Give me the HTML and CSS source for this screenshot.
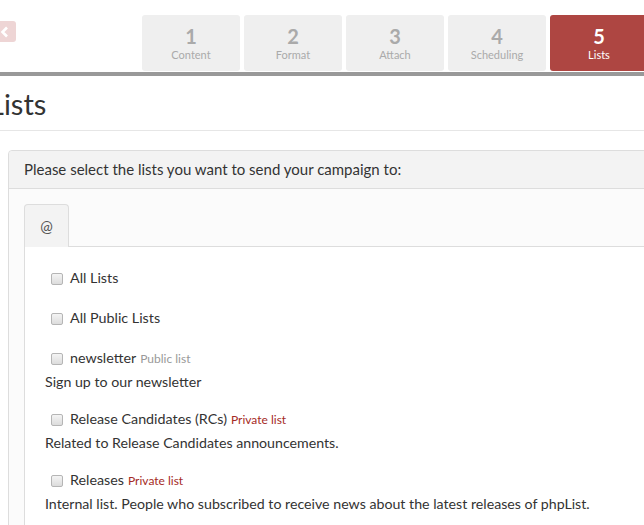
FILE: index.html
```html
<!DOCTYPE html>
<html>
<head>
<meta charset="utf-8">
<link rel="stylesheet" href="styles.css">
</head>
<body>
<div class="page">
  <div class="topbar">
    <a class="back" href="#"><svg width="10" height="12" viewBox="0 0 10 12"><path d="M7 1.5 L2.5 6 L7 10.5" fill="none" stroke="#fff" stroke-width="2.6"/></svg></a>
    <ul class="steps">
      <li class="step"><span class="num">1</span><span class="lbl">Content</span></li>
      <li class="step"><span class="num">2</span><span class="lbl">Format</span></li>
      <li class="step"><span class="num">3</span><span class="lbl">Attach</span></li>
      <li class="step"><span class="num">4</span><span class="lbl">Scheduling</span></li>
      <li class="step active"><span class="num">5</span><span class="lbl">Lists</span></li>
    </ul>
  </div>
  <h1 class="title">Lists</h1>
  <div class="panel">
    <div class="panel-head">Please select the lists you want to send your campaign to:</div>
    <div class="panel-body">
      <div class="tabs">
        <div class="tab">@</div>
        <div class="tab-fill"></div>
      </div>
      <div class="tab-content">
        <div class="item"><label class="chk"><input type="checkbox"><span>All Lists</span></label></div>
        <div class="item"><label class="chk"><input type="checkbox"><span>All Public Lists</span></label></div>
        <div class="item"><label class="chk"><input type="checkbox"><span>newsletter</span> <small class="pub">Public list</small></label>
          <p class="desc">Sign up to our newsletter</p></div>
        <div class="item"><label class="chk"><input type="checkbox"><span>Release Candidates (RCs)</span> <small class="priv">Private list</small></label>
          <p class="desc">Related to Release Candidates announcements.</p></div>
        <div class="item"><label class="chk"><input type="checkbox"><span>Releases</span> <small class="priv">Private list</small></label>
          <p class="desc">Internal list. People who subscribed to receive news about the latest releases of phpList.</p></div>
      </div>
    </div>
  </div>
</div>
</body>
</html>
```
FILE: styles.css
```css
html, body {
  margin: 0;
  padding: 0;
  background: #fff;
  overflow: hidden;
}
body {
  font-family: "Lato", "Open Sans", sans-serif;
  color: #333;
  width: 644px;
  height: 525px;
}
.page {
  width: 644px;
  height: 525px;
  overflow: hidden;
}
.topbar {
  display: flex;
  align-items: flex-start;
  height: 72px;
  border-bottom: 4px solid #999;
  margin-bottom: 1px;
}
.back {
  display: flex;
  align-items: center;
  justify-content: center;
  flex: none;
  width: 22px;
  height: 21px;
  margin-left: -6px;
  margin-top: 21px;
  background: #eed5d5;
  border-radius: 3px;
}
.steps {
  list-style: none;
  margin: 15px 0 0 126px;
  padding: 0;
  display: flex;
  gap: 4px;
}
.step {
  flex: none;
  width: 98px;
  height: 56px;
  background: #efefef;
  border-radius: 3px;
  display: flex;
  flex-direction: column;
  align-items: center;
  color: #aaa;
}
.step .num {
  font-weight: 700;
  font-size: 20px;
  line-height: 20px;
  margin-top: 11px;
}
.step .lbl {
  font-size: 11px;
  line-height: 14px;
  margin-top: 2px;
}
.step.active {
  background: #ae4642;
  color: #fff;
}
.title {
  font-weight: 400;
  font-size: 29px;
  line-height: 34px;
  margin: 0;
  padding: 10px 0 9px;
  text-indent: -11px;
  color: #333;
  border-bottom: 1px solid #e6e6e6;
}
.panel {
  margin: 19px -10px 0 8px;
  border: 1px solid #ddd;
  border-radius: 4px;
  background: #fbfbfb;
  height: 400px;
}
.panel-head {
  background: #f3f3f3;
  border-bottom: 1px solid #ddd;
  border-radius: 4px 4px 0 0;
  padding: 0 15px;
  height: 37px;
  line-height: 37px;
  font-size: 15px;
  color: #333;
}
.panel-body {
  padding: 15px 0 0 15px;
}
.tabs {
  display: flex;
  align-items: flex-end;
  height: 43px;
}
.tab {
  width: 43px;
  height: 42px;
  border: 1px solid #ddd;
  border-bottom: none;
  border-radius: 4px 4px 0 0;
  background: #f3f3f3;
  text-align: center;
  line-height: 42px;
  font-size: 15px;
  color: #555;
}
.tab-fill {
  flex: 1;
  border-bottom: 1px solid #ddd;
}
.tab-content {
  border-left: 1px solid #ddd;
  background: #fff;
  padding: 21px 0 0 20px;
  height: 300px;
}
.item + .item {
  padding-top: 20px;
}
.chk {
  display: flex;
  align-items: center;
  height: 20px;
  font-size: 14.3px;
  line-height: 20px;
  color: #333;
  padding-left: 6px;
}
.chk input {
  -webkit-appearance: none;
  appearance: none;
  flex: none;
  width: 12px;
  height: 12px;
  margin: 2px 7px 0 0;
  border: 1px solid #b5b5b5;
  border-radius: 2px;
  background: linear-gradient(#f4f4f4, #dcdcdc);
}
.chk small {
  font-size: 12px;
  margin-left: 4px;
  position: relative;
  top: 1px;
}
.pub { color: #999; }
.priv { color: #a52a25; }
.desc {
  margin: 4px 0 -3px 0;
  font-size: 14.2px;
  line-height: 20px;
  color: #333;
  white-space: nowrap;
}
```
